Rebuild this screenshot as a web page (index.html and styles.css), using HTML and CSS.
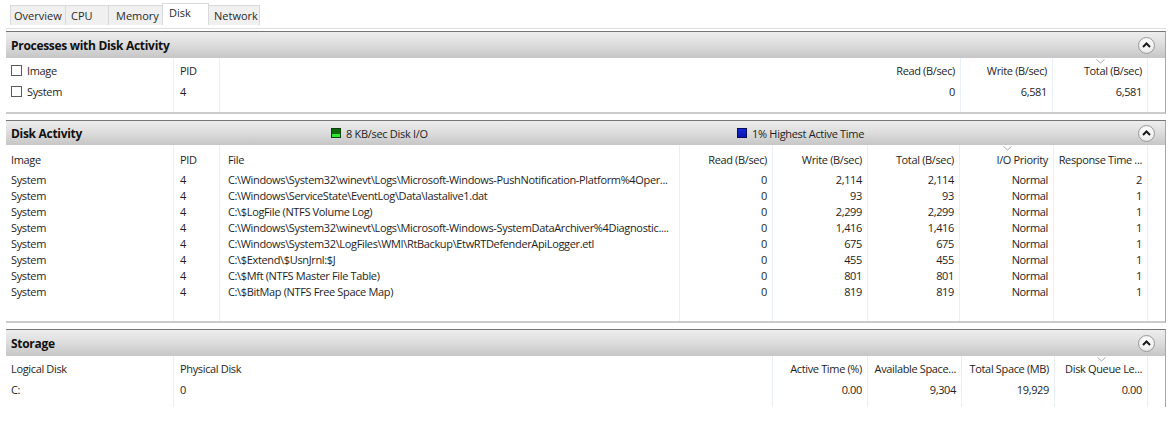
FILE: index.html
```html
<!DOCTYPE html>
<html>
<head>
<meta charset="utf-8">
<link rel="stylesheet" href="styles.css">
</head>
<body>
<div class="tabs">
  <div class="tab first">Overview</div>
  <div class="tab t-cpu">CPU</div>
  <div class="tab t-mem">Memory</div>
  <div class="tab active">Disk</div>
  <div class="tab t-net">Network</div>
</div>
<div class="shadow-rule"></div>

<section class="panel p1">
  <div class="phead">
    <span class="ptitle">Processes with Disk Activity</span>
    <span class="collapse"><svg width="17" height="17" viewBox="0 0 17 17"><polyline points="5,10 8.5,6.5 12,10" fill="none" stroke="#1a1a1a" stroke-width="2"/></svg></span>
  </div>
  <div class="pbody">
    <div class="col w168"><div class="hcell"><span class="cb"></span>Image</div><div class="cell"><span class="cb"></span>System</div></div>
    <div class="col w46"><div class="hcell">PID</div><div class="cell">4</div></div>
    <div class="col w648 nob"><div class="hcell"></div><div class="cell"></div></div>
    <div class="col w93 num"><div class="hcell">Read (B/sec)</div><div class="cell">0</div></div>
    <div class="col w92 num"><div class="hcell">Write (B/sec)</div><div class="cell">6,581</div></div>
    <div class="col w95 num"><div class="hcell sorted">Total (B/sec)<svg class="sort" width="9" height="5" viewBox="0 0 9 5"><polyline points="0.5,0.5 4.5,4 8.5,0.5" fill="none" stroke="#a8a8a8" stroke-width="1"/></svg></div><div class="cell">6,581</div></div>
    <div class="col fill nob"></div>
  </div>
</section>

<section class="panel p2">
  <div class="phead">
    <span class="ptitle t2">Disk Activity</span>
    <span class="legend l1"><span class="sq green"></span>8 KB/sec Disk I/O</span>
    <span class="legend"><span class="sq blue"></span>1% Highest Active Time</span>
    <span class="collapse"><svg width="17" height="17" viewBox="0 0 17 17"><polyline points="5,10 8.5,6.5 12,10" fill="none" stroke="#1a1a1a" stroke-width="2"/></svg></span>
  </div>
  <div class="pbody">
    <div class="col w168">
      <div class="hcell">Image</div>
      <div class="cell">System</div><div class="cell">System</div><div class="cell">System</div><div class="cell">System</div>
      <div class="cell">System</div><div class="cell">System</div><div class="cell">System</div><div class="cell">System</div>
    </div>
    <div class="col w46">
      <div class="hcell">PID</div>
      <div class="cell">4</div><div class="cell">4</div><div class="cell">4</div><div class="cell">4</div>
      <div class="cell">4</div><div class="cell">4</div><div class="cell">4</div><div class="cell">4</div>
    </div>
    <div class="col w460 file">
      <div class="hcell">File</div>
      <div class="cell">C:\Windows\System32\winevt\Logs\Microsoft-Windows-PushNotification-Platform%4Oper...</div>
      <div class="cell">C:\Windows\ServiceState\EventLog\Data\lastalive1.dat</div>
      <div class="cell">C:\$LogFile (NTFS Volume Log)</div>
      <div class="cell">C:\Windows\System32\winevt\Logs\Microsoft-Windows-SystemDataArchiver%4Diagnostic....</div>
      <div class="cell">C:\Windows\System32\LogFiles\WMI\RtBackup\EtwRTDefenderApiLogger.etl</div>
      <div class="cell">C:\$Extend\$UsnJrnl:$J</div>
      <div class="cell">C:\$Mft (NTFS Master File Table)</div>
      <div class="cell">C:\$BitMap (NTFS Free Space Map)</div>
    </div>
    <div class="col w93 num">
      <div class="hcell">Read (B/sec)</div>
      <div class="cell">0</div><div class="cell">0</div><div class="cell">0</div><div class="cell">0</div>
      <div class="cell">0</div><div class="cell">0</div><div class="cell">0</div><div class="cell">0</div>
    </div>
    <div class="col w95 num">
      <div class="hcell">Write (B/sec)</div>
      <div class="cell">2,114</div><div class="cell">93</div><div class="cell">2,299</div><div class="cell">1,416</div>
      <div class="cell">675</div><div class="cell">455</div><div class="cell">801</div><div class="cell">819</div>
    </div>
    <div class="col w92 num">
      <div class="hcell">Total (B/sec)</div>
      <div class="cell">2,114</div><div class="cell">93</div><div class="cell">2,299</div><div class="cell">1,416</div>
      <div class="cell">675</div><div class="cell">455</div><div class="cell">801</div><div class="cell">819</div>
    </div>
    <div class="col w94 num">
      <div class="hcell sorted">I/O Priority<svg class="sort" width="9" height="5" viewBox="0 0 9 5"><polyline points="0.5,0.5 4.5,4 8.5,0.5" fill="none" stroke="#a8a8a8" stroke-width="1"/></svg></div>
      <div class="cell">Normal</div><div class="cell">Normal</div><div class="cell">Normal</div><div class="cell">Normal</div>
      <div class="cell">Normal</div><div class="cell">Normal</div><div class="cell">Normal</div><div class="cell">Normal</div>
    </div>
    <div class="col w94 num">
      <div class="hcell">Response Time ...</div>
      <div class="cell">2</div><div class="cell">1</div><div class="cell">1</div><div class="cell">1</div>
      <div class="cell">1</div><div class="cell">1</div><div class="cell">1</div><div class="cell">1</div>
    </div>
    <div class="col fill nob"></div>
  </div>
</section>

<section class="panel p3">
  <div class="phead">
    <span class="ptitle">Storage</span>
    <span class="collapse"><svg width="17" height="17" viewBox="0 0 17 17"><polyline points="5,10 8.5,6.5 12,10" fill="none" stroke="#1a1a1a" stroke-width="2"/></svg></span>
  </div>
  <div class="pbody">
    <div class="col w168"><div class="hcell">Logical Disk</div><div class="cell">C:</div></div>
    <div class="col w599"><div class="hcell">Physical Disk</div><div class="cell">0</div></div>
    <div class="col w95 num"><div class="hcell">Active Time (%)</div><div class="cell">0.00</div></div>
    <div class="col w94 num"><div class="hcell">Available Space...</div><div class="cell">9,304</div></div>
    <div class="col w93 num"><div class="hcell">Total Space (MB)</div><div class="cell">19,929</div></div>
    <div class="col w93 num"><div class="hcell sorted">Disk Queue Le...<svg class="sort" width="9" height="5" viewBox="0 0 9 5"><polyline points="0.5,0.5 4.5,4 8.5,0.5" fill="none" stroke="#a8a8a8" stroke-width="1"/></svg></div><div class="cell">0.00</div></div>
    <div class="col fill nob"></div>
  </div>
</section>
</body>
</html>
```

FILE: styles.css
```css
* { box-sizing: border-box; }
body {
  margin: 0;
  background: #ffffff;
  font-family: "Open Sans", "Noto Sans", sans-serif;
  font-size: 11px;
  color: #1e1e1e;
  width: 1169px;
  height: 421px;
  overflow: hidden;
}

/* tabs */
.tabs {
  display: flex;
  align-items: flex-end;
  height: 25px;
  padding-left: 10px;
}
.tab {
  height: 20px;
  line-height: 19px;
  padding-left: 5px;
  background: #f0f0f0;
  border: 1px solid #d9d9d9;
  border-bottom: none;
  margin-left: -1px;
  color: #2a2a2a;
  white-space: nowrap;
}
.tab.first { width: 56px; padding-left: 3px; margin-left: 0; }
.tab.t-cpu { width: 44px; }
.tab.t-mem { width: 55px; padding-left: 7px; }
.tab.active {
  height: 22px;
  line-height: 17px;
  width: 47px;
  background: #ffffff;
  padding-left: 6px;
}
.tab.t-net { width: 52px; }

.shadow-rule {
  margin: 3px 3px 0 6px;
  height: 1px;
  background: #dedede;
}

/* panels */
.panel {
  margin-left: 6px;
  width: 1160px;
  border-top: 1px solid #767676;
  border-right: 1px solid #a6a6a6;
}
.p1 { margin-top: 2px; border-bottom: 2px solid #cbcbcb; }
.p2 { margin-top: 6px; border-bottom: 2px solid #cbcbcb; }
.p3 { margin-top: 6px; }

.phead {
  display: flex;
  align-items: center;
  height: 26px;
  padding-left: 5px;
  background: linear-gradient(to bottom, #ededed 0%, #dedede 45%, #c6c6c6 100%);
}
.p2 .phead { height: 24px; }
.p3 .phead { height: 26px; }

.ptitle {
  font-weight: 700;
  font-size: 12px;
  letter-spacing: -0.3px;
  color: #111;
  white-space: nowrap;
}
.ptitle.t2 { width: 320px; }

.legend {
  display: flex;
  align-items: center;
  gap: 5px;
  color: #1e1e1e;
  white-space: nowrap;
  letter-spacing: -0.3px;
}
.legend.l1 { width: 406px; }
.sq {
  width: 10px;
  height: 10px;
  display: inline-block;
}
.sq.green {
  border: 1px solid #0a3f0a;
  background: linear-gradient(to bottom, #0c6a0c 0%, #0c6a0c 65%, #2ee82e 65%, #2ee82e 100%);
}
.sq.blue {
  border: 1px solid #0a0a5a;
  background: linear-gradient(to bottom, #1428d8, #0a18b0);
}

.collapse {
  margin-left: auto;
  margin-right: 10px;
  width: 17px;
  height: 17px;
  border-radius: 50%;
  border: 1px solid #9a9a9a;
  background: radial-gradient(circle at 50% 35%, #ffffff 0%, #f2f2f2 55%, #d8d8d8 100%);
  display: flex;
  align-items: center;
  justify-content: center;
}
.collapse svg { display: block; margin: -1px; }

.pbody {
  display: flex;
  background: #ffffff;
  letter-spacing: -0.35px;
}
.p1 .pbody { height: 54px; }
.p2 .pbody { height: 176px; }
.p3 .pbody { height: 51px; }

.col {
  border-right: 1px solid #e9eff5;
  overflow: hidden;
  flex: none;
}
.col.nob { border-right: none; }
.fill { flex: 1; }
.w168 { width: 168px; }
.w46 { width: 46px; }
.w648 { width: 648px; }
.w460 { width: 460px; }
.w599 { width: 599px; }
.w92 { width: 92px; }
.w93 { width: 93px; }
.w94 { width: 94px; }
.w95 { width: 95px; }

.hcell, .cell {
  padding: 0 5px;
  white-space: nowrap;
  overflow: hidden;
  display: flex;
  align-items: center;
}
.num .hcell, .num .cell { justify-content: flex-end; }
.file .hcell, .file .cell { padding-left: 8px; }
.w46 .hcell, .w46 .cell, .w599 .hcell, .w599 .cell { padding-left: 6px; }

.p1 .hcell { height: 24px; padding-top: 1px; }
.p1 .cell { height: 18px; }
.p2 .hcell { height: 26px; padding-top: 3px; }
.p2 .cell { height: 16px; }
.p3 .hcell { height: 24px; padding-top: 1px; }
.p3 .cell { height: 18px; }

.sorted { position: relative; }
.sort {
  position: absolute;
  top: 1px;
  left: 50%;
  margin-left: -4px;
}

.cb {
  width: 11px;
  height: 11px;
  border: 1px solid #5a5a5a;
  background: #fff;
  margin-right: 5px;
  flex: none;
}
```
